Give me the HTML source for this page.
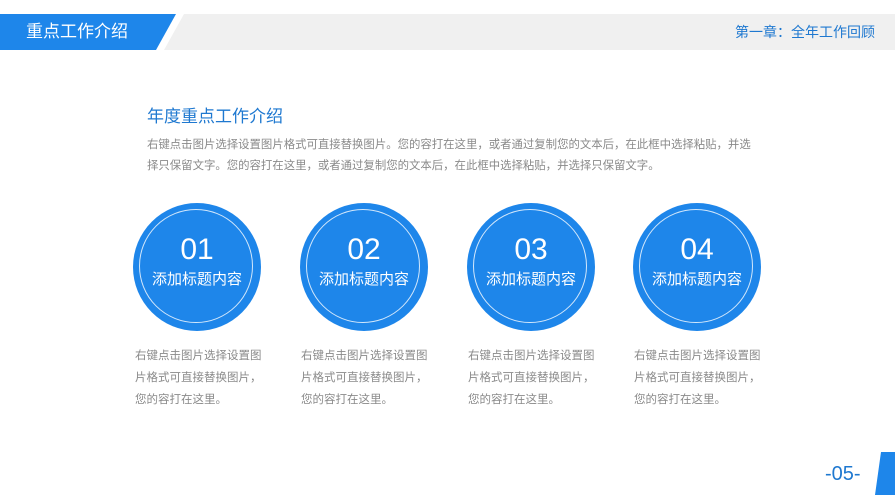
<!DOCTYPE html><html><head><meta charset="utf-8"><style>
body{margin:0;width:895px;height:504px;background:#fff;position:relative;overflow:hidden;font-family:"Liberation Sans","Noto Sans CJK SC",sans-serif}
.a{position:absolute}
.c{position:absolute;width:128px;height:128px;border-radius:50%;background:#1e86ea;top:203px}
.c .r{position:absolute;left:6px;top:6px;width:114px;height:114px;border-radius:50%;border:1px solid rgba(255,255,255,.8);box-sizing:border-box}
.c .n{position:absolute;top:30px;width:100%;text-align:center;color:#fff;font-size:30px;line-height:34px}
.c .t{position:absolute;top:67px;width:100%;text-align:center;color:#fff;font-size:15px;line-height:20px}
.d{position:absolute;top:345px;width:140px;font-size:11.5px;line-height:22px;color:#8a8a8a;white-space:nowrap}
</style></head><body>
<div class="a" style="left:0;top:14px;width:895px;height:36px;background:#f0f0f0;clip-path:polygon(184px 0,895px 0,895px 36px,164px 36px)"></div>
<div class="a" style="left:0;top:14px;width:176px;height:36px;background:#1e86ea;clip-path:polygon(0 0,176px 0,156px 36px,0 36px)"></div>
<div class="a" style="left:26px;top:20px;color:#fff;font-size:17px;line-height:24px">重点工作介绍</div>
<div class="a" style="right:20px;top:21px;color:#1e78d0;font-size:14px;line-height:22px">第一章：全年工作回顾</div>
<div class="a" style="left:147px;top:105px;color:#1e78d0;font-size:17px;line-height:24px">年度重点工作介绍</div>
<div class="a" style="left:147px;top:135px;color:#8a8a8a;font-size:11.4px;line-height:21px;white-space:nowrap">右键点击图片选择设置图片格式可直接替换图片。您的容打在这里，或者通过复制您的文本后，在此框中选择粘贴，并选<br>择只保留文字。您的容打在这里，或者通过复制您的文本后，在此框中选择粘贴，并选择只保留文字。</div>
<div class="c" style="left:133px"><div class="r"></div><div class="n">01</div><div class="t">添加标题内容</div></div>
<div class="c" style="left:300px"><div class="r"></div><div class="n">02</div><div class="t">添加标题内容</div></div>
<div class="c" style="left:467px"><div class="r"></div><div class="n">03</div><div class="t">添加标题内容</div></div>
<div class="c" style="left:633px"><div class="r"></div><div class="n">04</div><div class="t">添加标题内容</div></div>
<div class="d" style="left:135px">右键点击图片选择设置图<br>片格式可直接替换图片，<br>您的容打在这里。</div>
<div class="d" style="left:301px">右键点击图片选择设置图<br>片格式可直接替换图片，<br>您的容打在这里。</div>
<div class="d" style="left:468px">右键点击图片选择设置图<br>片格式可直接替换图片，<br>您的容打在这里。</div>
<div class="d" style="left:634px">右键点击图片选择设置图<br>片格式可直接替换图片，<br>您的容打在这里。</div>
<div class="a" style="left:825px;top:460px;color:#1e78d0;font-size:20px;line-height:28px">-05-</div>
<div class="a" style="left:875px;top:452px;width:20px;height:43px;background:#1e86ea;clip-path:polygon(6px 0,20px 0,20px 43px,0 43px)"></div>
</body></html>
